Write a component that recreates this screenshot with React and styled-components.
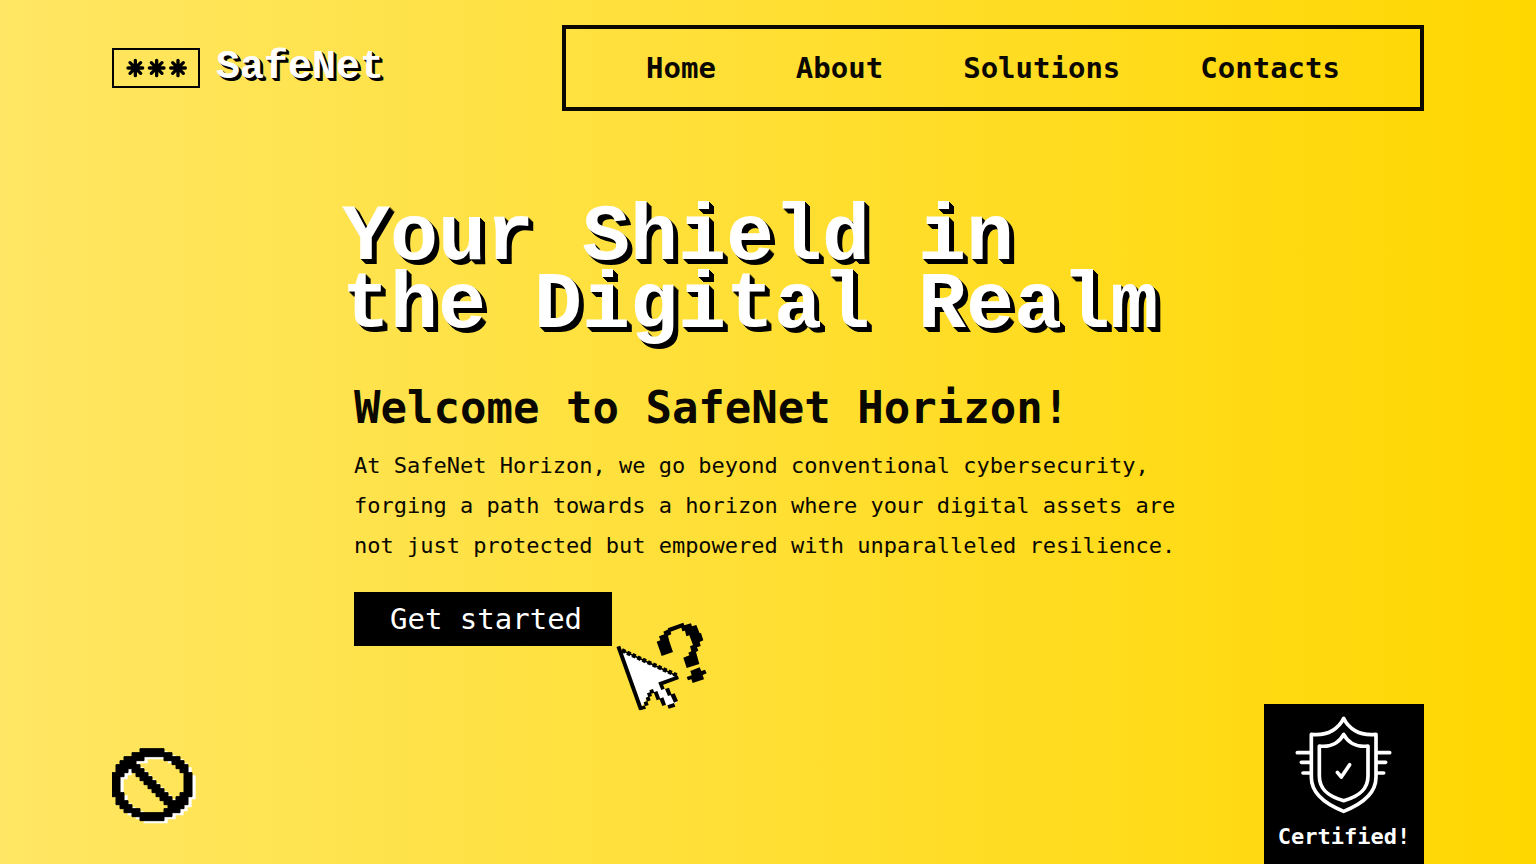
import React from "react";
import styled, { createGlobalStyle } from "styled-components";

const GlobalStyle = createGlobalStyle`
  *, *::before, *::after { box-sizing: border-box; }
  body {
    margin: 0;
    color: #0a0800;
    font-family: Consolas, "DejaVu Sans Mono", monospace;
  }
`;

const Page = styled.div`
  min-height: 100vh;
  display: flex;
  flex-direction: column;
  background: linear-gradient(to right, #ffe664 0%, #ffdf33 50%, #ffd700 100%);
`;

const Header = styled.header`
  display: flex;
  align-items: center;
  justify-content: space-between;
  padding: 25px 112px 0;
`;

const Logo = styled.a`
  display: flex;
  align-items: center;
  gap: 16px;
  color: #fff;
  text-decoration: none;
`;

const LogoBadge = styled.span`
  display: flex;
  align-items: center;
  justify-content: center;
  width: 88px;
  height: 40px;
  border: 2px solid #000;
`;

const LogoName = styled.span`
  font-family: "Liberation Mono", monospace;
  font-size: 40px;
  line-height: 40px;
  font-weight: 700;
  text-shadow: 1px 1px 0 #000, 2px 2px 0 #000, 3px 3px 0 #000;
`;

const Nav = styled.nav`
  display: flex;
  align-items: center;
  gap: 80px;
  height: 86px;
  padding: 0 80px;
  border: 4px solid #0a0800;
`;

const NavLink = styled.a`
  color: inherit;
  font-size: 29px;
  line-height: 40px;
  font-weight: 700;
  text-decoration: none;
`;

const Hero = styled.main`
  width: 100%;
  max-width: 828px;
  margin: 0 auto;
  padding-top: 93px;
`;

const Title = styled.h1`
  margin: 0 0 44px -12px;
  color: #fff;
  font-family: "Liberation Mono", monospace;
  font-size: 80px;
  line-height: 68px;
  font-weight: 700;
  white-space: nowrap;
  text-shadow: 1px 1px 0 #000, 2px 2px 0 #000, 3px 3px 0 #000, 4px 4px 0 #000, 5px 5px 0 #000;
`;

const Subtitle = styled.h2`
  margin: 0 0 14px;
  font-size: 44px;
  line-height: 48px;
  font-weight: 700;
`;

const Lead = styled.p`
  margin: 0 0 26px;
  font-size: 22px;
  line-height: 40px;
`;

const Action = styled.div`
  position: relative;
  width: fit-content;
`;

const Button = styled.button`
  display: block;
  height: 54px;
  padding: 0 30px 0 36px;
  border: 0;
  background: #000;
  color: #fff;
  font-family: inherit;
  font-size: 29px;
  line-height: 40px;
  cursor: pointer;
`;

const Pointer = styled.svg`
  position: absolute;
  top: 28px;
  left: calc(100% + 4px);
  pointer-events: none;
`;

const Footer = styled.footer`
  display: flex;
  align-items: flex-end;
  justify-content: space-between;
  margin-top: auto;
  padding: 0 112px;
`;

const Forbidden = styled.svg`
  margin-bottom: 40px;
`;

const Certificate = styled.div`
  display: flex;
  flex-direction: column;
  align-items: center;
  gap: 6px;
  width: 160px;
  height: 160px;
  padding-top: 11px;
  background: #000;
  color: #fff;
  font-size: 22px;
  line-height: 32px;
  font-weight: 700;
`;

const links = ["Home", "About", "Solutions", "Contacts"];

function Asterisks() {
  return (
    <svg width="63" height="20" viewBox="75 84 189 60" aria-hidden="true">
      <g stroke="#000" strokeWidth="10" strokeLinecap="round">
        {[106, 170, 234].map((x) => (
          <path key={x} d={`M${x} 91V137M${x - 22} 114H${x + 22}M${x - 16} 98l32 32M${x + 16} 98l-32 32`} />
        ))}
      </g>
    </svg>
  );
}

function CursorQuestion() {
  return (
    <Pointer width="94" height="92" viewBox="48 30 282 276" aria-hidden="true">
      <path
        fill="#fff"
        d="M62 118L228 199L184 220L194 238L208 236L214 256L228 260L232 276L206 290L196 282L190 268L176 266L166 248L154 242L124 292Z"
      />
      <path fill="none" stroke="#000" strokeWidth="12" d="M55 109L123 299" />
      <path fill="none" stroke="#000" strokeWidth="5" d="M66 121L230 197" />
      <path fill="none" stroke="#000" strokeWidth="13" strokeDasharray="11 6" d="M66 121L230 196" />
      <path fill="none" stroke="#000" strokeWidth="11" d="M235 202L182 221L189 238" />
      <path
        fill="#000"
        d="M122 290l12-4 4 10-18 5zM131 277l11-4 4 12-11 4zM137 263l11-4 4 12-11 4zM141 250l11-4 4 12-11 4zM148 241l11-4 4 11-11 4zM161 247l11-4 9 24-11 4zM178 266l12-4 8 22-11 4zM195 237l12-4 8 21-11 4zM211 254l13-4 10 23-12 5zM202 286l20-7 4 11-20 6z"
      />
      <path
        fill="#000"
        d="M170 95L181 91L177 79L193 73L190 65L205 58L203 55L250 38L253 46L273 40L276 49L289 45L299 70L303 69L310 91L299 96L302 108L291 112L295 122L288 126L298 162L260 174L250 143L268 136L265 128L274 124L270 109L279 105L268 76L259 79L255 62L247 64L244 53L212 65L214 73L204 77L208 94L219 126L185 138L181 126L177 115Z"
      />
      <path fill="#000" d="M271 183L299 172L304 183L315 179L320 190L308 195L312 208L278 219L274 208L264 211L260 201L275 196Z" />
    </Pointer>
  );
}

const ringPath =
  "M120 38H192V50H216V62H240V74H252V86H264V110H276V182H264V206H252V218H240V230H216V242H192V254H120V242H96V230H72V218H60V206H48V182H36V110H48V86H60V74H72V62H96V50H120Z" +
  "M132 62V74H108V86H120V98H132V110H144V122H156V134H168V146H180V158H192V170H204V182H216V194H228V182H240V170H252V110H240V98H228V86H216V74H192V62Z" +
  "M84 98V110H72V122H60V170H72V194H84V206H96V218H120V230H192V218H204V206H192V194H180V182H168V170H156V158H144V146H132V134H120V122H108V110H96V98Z";

function ForbiddenIcon() {
  return (
    <Forbidden width="85" height="76" viewBox="36 36 255 228" role="img" aria-label="Blocked">
      <path d={ringPath} transform="translate(11 8)" fill="#fff" fillRule="evenodd" />
      <path d={ringPath} fill="#000" stroke="#000" strokeWidth="3" fillRule="evenodd" />
    </Forbidden>
  );
}

function ShieldIcon() {
  return (
    <svg width="100" height="100" viewBox="131 75 300 300" aria-hidden="true">
      <g fill="none" stroke="#fff" strokeWidth="11" strokeLinecap="round" strokeLinejoin="round">
        <path d="M280 85C267 113 235 139 183 133V262C183 312 224 342 280 364C336 342 377 312 377 262V133C325 139 293 113 280 85Z" />
        <path d="M280 133C269 154 246 173 207 168V258C207 300 236 320 280 332C324 320 353 300 353 258V168C314 173 291 154 280 133Z" />
        <path d="M261 247L273 261L298 224" />
        <path d="M141 188H180M153 217H180M158 249H180M380 188H418M380 217H406M380 249H400" />
      </g>
    </svg>
  );
}

export default function App() {
  return (
    <>
      <GlobalStyle />
      <Page>
        <Header>
          <Logo href="#">
            <LogoBadge>
              <Asterisks />
            </LogoBadge>
            <LogoName>SafeNet</LogoName>
          </Logo>
          <Nav>
            {links.map((label) => (
              <NavLink key={label} href={`#${label.toLowerCase()}`}>
                {label}
              </NavLink>
            ))}
          </Nav>
        </Header>
        <Hero>
          <Title>
            Your Shield in
            <br />
            the Digital Realm
          </Title>
          <Subtitle>Welcome to SafeNet Horizon!</Subtitle>
          <Lead>
            At SafeNet Horizon, we go beyond conventional cybersecurity, forging a path towards a
            horizon where your digital assets are not just protected but empowered with
            unparalleled resilience.
          </Lead>
          <Action>
            <Button type="button">Get started</Button>
            <CursorQuestion />
          </Action>
        </Hero>
        <Footer>
          <ForbiddenIcon />
          <Certificate>
            <ShieldIcon />
            <span>Certified!</span>
          </Certificate>
        </Footer>
      </Page>
    </>
  );
}
